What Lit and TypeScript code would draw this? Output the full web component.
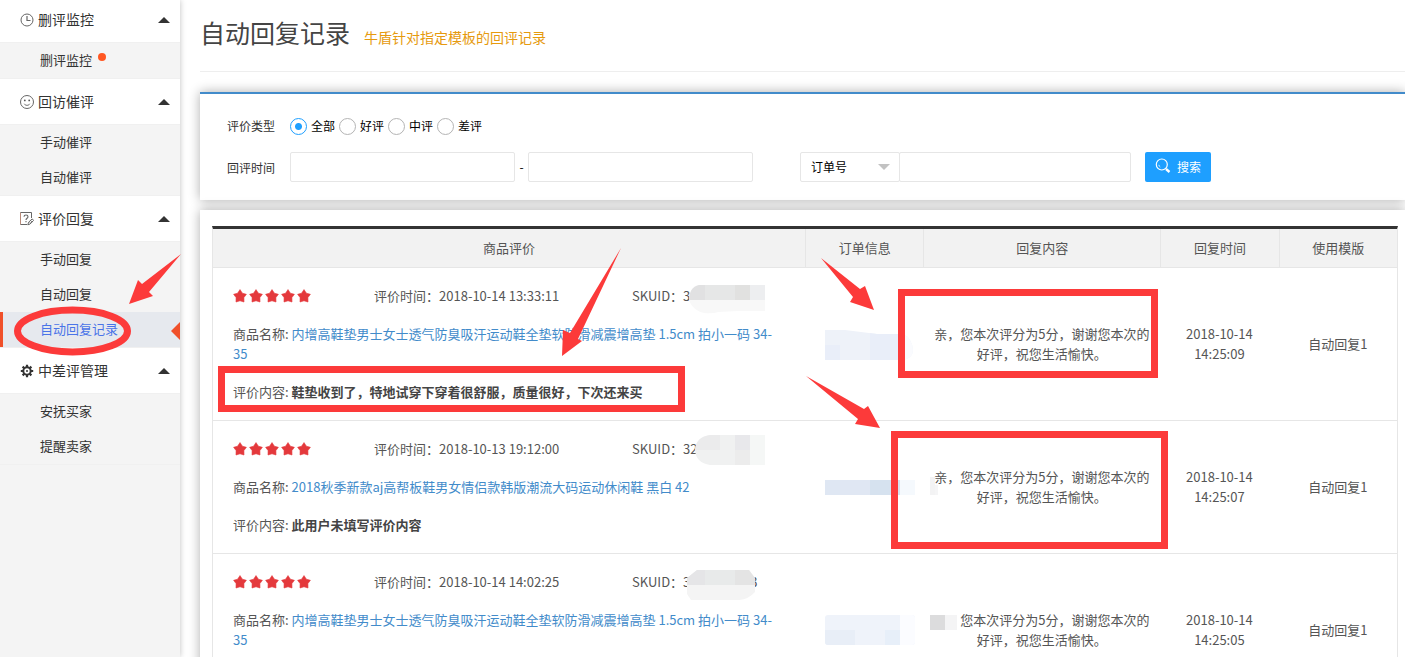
import { LitElement, html, css, svg, nothing } from "lit";
import { customElement, property, state } from "lit/decorators.js";
import { classMap } from "lit/directives/class-map.js";

interface MenuItem {
  label: string;
  active?: boolean;
  dot?: boolean;
}

interface MenuGroup {
  icon: string;
  label: string;
  items: MenuItem[];
}

interface ReplyRecord {
  time: string;
  sku: string;
  skuTail?: string;
  product: string;
  comment: string;
  reply: string;
  replyTime: string;
  template: string;
}

const MENU: MenuGroup[] = [
  { icon: "clock", label: "删评监控", items: [{ label: "删评监控", dot: true }] },
  { icon: "smile", label: "回访催评", items: [{ label: "手动催评" }, { label: "自动催评" }] },
  {
    icon: "note",
    label: "评价回复",
    items: [{ label: "手动回复" }, { label: "自动回复" }, { label: "自动回复记录", active: true }],
  },
  { icon: "gear", label: "中差评管理", items: [{ label: "安抚买家" }, { label: "提醒卖家" }] },
];

const INSOLE = "内增高鞋垫男士女士透气防臭吸汗运动鞋全垫软防滑减震增高垫 1.5cm 拍小一码 34-35";
const REPLY = "亲，您本次评分为5分，谢谢您本次的好评，祝您生活愉快。";

const RECORDS: ReplyRecord[] = [
  {
    time: "2018-10-14 13:33:11",
    sku: "3",
    product: INSOLE,
    comment: "鞋垫收到了，特地试穿下穿着很舒服，质量很好，下次还来买",
    reply: REPLY,
    replyTime: "2018-10-14 14:25:09",
    template: "自动回复1",
  },
  {
    time: "2018-10-13 19:12:00",
    sku: "32",
    product: "2018秋季新款aj高帮板鞋男女情侣款韩版潮流大码运动休闲鞋 黑白 42",
    comment: "此用户未填写评价内容",
    reply: REPLY,
    replyTime: "2018-10-14 14:25:07",
    template: "自动回复1",
  },
  {
    time: "2018-10-14 14:02:25",
    sku: "3",
    skuTail: "3",
    product: INSOLE,
    comment: "此用户未填写评价内容",
    reply: REPLY,
    replyTime: "2018-10-14 14:25:05",
    template: "自动回复1",
  },
];

const ICONS: Record<string, unknown> = {
  clock: svg`<g fill="none" stroke="#666" stroke-width="1"><circle cx="7" cy="7" r="6"/><path d="M7 3v4.500h3.500" stroke-width="1.200"/></g>`,
  smile: svg`<g fill="none" stroke="#666" stroke-width="1"><circle cx="7" cy="7" r="6.500"/><path d="M4.200 8.800c1.200 2 4.400 2 5.600 0"/></g><circle cx="4.800" cy="5.400" r=".9" fill="#555"/><circle cx="9.200" cy="5.400" r=".9" fill="#555"/>`,
  note: svg`<g fill="none" stroke="#666" stroke-width="1"><path d="M.5 12.500V.5" stroke="#b98a78"/><path d="M.5.5H11.500V6M.5 12.500H7"/><path d="M4 4.800c0-2.400 4-2.400 4 0 0 1.500-2 1.500-2 3.200M6 9v1.200" stroke-width="1.100"/><path d="M7.800 12.800l.8-2.600 3.600-3.300 1.400 1.500-3.500 3.600zM9.400 10l1.600 1.600M10.800 8.600l1.500 1.500"/></g>`,
  gear: svg`<g fill="none" stroke="#333"><circle cx="7" cy="7" r="3.700" stroke-width="2"/><path d="M7 .8v2.400M7 10.800v2.400M.8 7h2.400M10.800 7h2.400M2.600 2.600l1.700 1.700M9.700 9.700l1.700 1.700M2.600 11.400l1.700-1.700M9.700 4.300l1.700-1.700" stroke-width="2.200"/></g><circle cx="7" cy="7" r="1" fill="#333"/>`,
};

const FONT = css`"Noto Sans CJK SC", "Noto Sans", sans-serif`;

@customElement("side-menu")
export class SideMenu extends LitElement {
  static styles = css`
    :host {
      display: block;
      background: #f4f4f4;
      box-shadow: 0 0 6px rgba(0, 0, 0, 0.25);
      color: #333;
    }
    .head {
      display: flex;
      align-items: center;
      gap: 4px;
      box-sizing: border-box;
      width: 100%;
      height: 45px;
      padding: 0 10px 0 20px;
      border: 0;
      background: #fff;
      color: inherit;
      font: 14px/20px ${FONT};
      text-align: left;
    }
    .group:first-child .head {
      height: 42px;
      padding-bottom: 2px;
    }
    .name {
      flex: 1;
      padding-bottom: 2px;
    }
    .icon {
      width: 14px;
      height: 14px;
    }
    .caret {
      width: 12px;
      height: 6px;
    }
    .list {
      margin: 0;
      padding: 0;
      list-style: none;
      border: solid #f0f0f0;
      border-width: 1px 0;
    }
    .item {
      position: relative;
      display: flex;
      height: 35px;
      padding-left: 40px;
      font-size: 13px;
      line-height: 33px;
    }
    .item a {
      color: inherit;
      text-decoration: none;
    }
    .item.active {
      background: #e6e9ee;
      color: #4a74e8;
      box-shadow: inset 3px 0 #f0502a;
    }
    .item.active::after {
      content: "";
      position: absolute;
      right: 0;
      top: 10px;
      border: 9px solid transparent;
      border-left: 0;
      border-right-color: #f0502a;
    }
    .dot {
      width: 8px;
      height: 8px;
      margin: 10px 0 0 6px;
      border-radius: 50%;
      background: #ff5722;
    }
  `;

  @property({ attribute: false }) groups: MenuGroup[] = [];

  render() {
    return html`<nav>
      ${this.groups.map(
        (g) => html`<div class="group">
          <button class="head" type="button" aria-expanded="true">
            <svg class="icon" viewBox="0 0 14 14" aria-hidden="true">${ICONS[g.icon]}</svg>
            <span class="name">${g.label}</span>
            <svg class="caret" viewBox="0 0 12 6" aria-hidden="true"><path d="M0 6L6 0l6 6z" fill="#333" /></svg>
          </button>
          <ul class="list">
            ${g.items.map(
              (i) => html`<li class=${classMap({ item: true, active: !!i.active })}>
                <a href="#">${i.label}</a>${i.dot ? html`<span class="dot"></span>` : nothing}
              </li>`,
            )}
          </ul>
        </div>`,
      )}
    </nav>`;
  }
}

@customElement("search-panel")
export class SearchPanel extends LitElement {
  static styles = css`
    :host {
      display: block;
      padding: 22px 27px 18px;
      border-top: 2px solid #428bca;
      background: #fff;
      box-shadow: 0 0 11px rgba(0, 0, 0, 0.32);
      color: #333;
      font-size: 12px;
      line-height: 20px;
    }
    .row {
      display: flex;
      align-items: center;
    }
    .row + .row {
      margin-top: 16px;
    }
    .label {
      flex: none;
      width: 63px;
      padding-top: 2px;
    }
    .row:first-child .label {
      padding-top: 0;
    }
    .radios {
      display: flex;
      gap: 4px;
    }
    .option {
      display: flex;
      align-items: center;
      gap: 4px;
      color: #000;
    }
    .radio {
      appearance: none;
      box-sizing: border-box;
      width: 17px;
      height: 17px;
      margin: 0;
      border: 1px solid #b4b4b4;
      border-radius: 50%;
    }
    .radio:checked {
      border-color: #1e9fff;
      background: radial-gradient(circle, #1e9fff 3px, transparent 4px);
    }
    .field {
      box-sizing: border-box;
      width: 225px;
      min-width: 0;
      height: 30px;
      padding: 0 10px;
      border: 1px solid #e6e6e6;
      border-radius: 2px;
      background: #fff;
      color: #000;
      font: 12px/18px ${FONT};
    }
    .dash {
      width: 13px;
      color: #000;
      text-align: center;
    }
    .picker {
      position: relative;
      display: flex;
      margin-left: 47px;
    }
    .picker::after {
      content: "";
      position: absolute;
      right: 10px;
      top: 12px;
      border: 6px solid transparent;
      border-top-color: #c2c2c2;
      border-bottom: 0;
      pointer-events: none;
    }
    .kind {
      appearance: none;
      width: 100px;
    }
    .keyword {
      width: 232px;
      margin-left: -1px;
    }
    .search {
      display: flex;
      flex: none;
      align-items: center;
      gap: 6px;
      height: 30px;
      margin-left: 14px;
      padding: 0 10px;
      border: 0;
      border-radius: 2px;
      background: #1e9fff;
      color: #fff;
      font: 12px/20px ${FONT};
    }
    .glass {
      width: 16px;
      height: 16px;
      margin-bottom: 2px;
    }
  `;

  @state() private kind = "全部";

  render() {
    return html`<form @submit=${(e: Event) => e.preventDefault()}>
      <div class="row" role="radiogroup" aria-labelledby="type-label">
        <span class="label" id="type-label">评价类型</span>
        <div class="radios">
          ${["全部", "好评", "中评", "差评"].map(
            (k) => html`<label class="option"
              ><input
                class="radio"
                type="radio"
                name="kind"
                .checked=${this.kind === k}
                @change=${() => (this.kind = k)}
              />${k}</label
            >`,
          )}
        </div>
      </div>
      <div class="row">
        <label class="label" for="from">回评时间</label>
        <input class="field" id="from" type="text" />
        <span class="dash">-</span>
        <input class="field" type="text" aria-label="回评时间" />
        <span class="picker">
          <select class="field kind" aria-label="订单号">
            <option>订单号</option>
          </select>
        </span>
        <input class="field keyword" type="text" aria-label="订单号" />
        <button class="search" type="submit">
          <svg class="glass" viewBox="0 0 16 16" fill="none" stroke="#fff" aria-hidden="true">
            <circle cx="6.800" cy="6.500" r="5.500" stroke-width="1.200" />
            <path d="M3.800 6.800a3 3 0 0 0 1.500 2.200" stroke-width=".8" />
            <path d="M11 11l3.500 3" stroke-width="2.400" />
          </svg>
          搜索
        </button>
      </div>
    </form>`;
  }
}

@customElement("record-table")
export class RecordTable extends LitElement {
  static styles = css`
    :host {
      display: block;
      padding: 16px 7px 16px 12px;
      background: #fff;
      box-shadow: 0 0 11px rgba(0, 0, 0, 0.32);
      color: #555;
      font-size: 13px;
      line-height: 20px;
    }
    .table {
      width: 100%;
      table-layout: fixed;
      border-collapse: separate;
      border-spacing: 0;
      border: 1px solid #e6e6e6;
      border-top: 3px solid #333;
    }
    .wide {
      width: 50%;
    }
    .medium {
      width: 20%;
    }
    .narrow {
      width: 10%;
    }
    th {
      box-sizing: border-box;
      height: 39px;
      padding: 0;
      border-bottom: 1px solid #e6e6e6;
      background: #f2f2f2;
      font-weight: 400;
    }
    th + th {
      border-left: 1px solid #e6e6e6;
    }
    td {
      padding: 18px 10px;
      border-bottom: 1px solid #e6e6e6;
      text-align: center;
    }
    .review {
      padding: 18px 20px;
      text-align: left;
    }
    .stack {
      display: grid;
      gap: 18px;
    }
    .meta {
      display: grid;
      grid-template-columns: 141px 258px 1fr;
      white-space: nowrap;
    }
    .stars {
      display: flex;
      align-items: center;
      gap: 2px;
    }
    .star {
      width: 14px;
      height: 14px;
    }
    .tail {
      margin-left: 60px;
    }
    .product {
      color: #428bca;
      text-decoration: none;
    }
    .comment {
      color: #444;
      font-weight: 700;
    }
  `;

  @property({ attribute: false }) records: ReplyRecord[] = [];

  private row(r: ReplyRecord) {
    return html`<tr>
      <td class="review">
        <div class="stack">
          <div class="meta">
            <span class="stars" role="img" aria-label="5">
              ${[1, 2, 3, 4, 5].map(
                () => html`<svg class="star" viewBox="0 0 14 14" aria-hidden="true">
                  <path
                    d="M7 .6L9.400 4.200 13.400 5.300 10.900 8.600 11 13 7 11.800 3 13 3.100 8.600.6 5.300 4.600 4.200z"
                    fill="#e4393c"
                    stroke="#e4393c"
                    stroke-width=".6"
                    stroke-linejoin="round"
                  />
                </svg>`,
              )}
            </span>
            <span>评价时间：${r.time}</span>
            <span>SKUID：${r.sku}${r.skuTail ? html`<span class="tail">${r.skuTail}</span>` : nothing}</span>
          </div>
          <div>商品名称: <a class="product" href="#">${r.product}</a></div>
          <div>评价内容: <span class="comment">${r.comment}</span></div>
        </div>
      </td>
      <td></td>
      <td>${r.reply}</td>
      <td>${r.replyTime}</td>
      <td>${r.template}</td>
    </tr>`;
  }

  render() {
    return html`<table class="table">
      <thead>
        <tr>
          <th class="wide">商品评价</th>
          <th class="narrow">订单信息</th>
          <th class="medium">回复内容</th>
          <th class="narrow">回复时间</th>
          <th class="narrow">使用模版</th>
        </tr>
      </thead>
      <tbody>
        ${this.records.map((r) => this.row(r))}
      </tbody>
    </table>`;
  }
}

/* Pixelated privacy patches: x, y, width, height, fill. */
const PATCHES: [number, number, number, number, string][] = [
  [825, 480, 15, 15, "#dfe7f3"],
  [840, 480, 30, 15, "#e0e7f3"],
  [870, 480, 30, 15, "#d6e2ef"],
  [900, 480, 15, 15, "#f5f9fd"],
  [930, 477, 5, 18, "#f3f3f4"],
  [935, 485, 3, 10, "#f5f5f6"],
  [930, 612, 30, 21, "#ffffff"],
  [930, 615, 15, 15, "#dcdcdd"],
  [945, 615, 12, 15, "#f4f4f5"],
];

@customElement("mark-layer")
export class MarkLayer extends LitElement {
  static styles = css`
    :host {
      display: block;
      pointer-events: none;
    }
    .canvas {
      display: block;
      width: 100%;
      height: 100%;
    }
  `;

  render() {
    return html`<svg class="canvas" aria-hidden="true">
      <defs>
        <clipPath id="sku1"><path d="M699 285h66v26h-27l-20 1q-5 2-14 1-10-2-15-12 0-14 10-16z" /></clipPath>
        <clipPath id="sku2"><path d="M710 435h55v30h-55q-14-2-15-15 1-13 15-15z" /></clipPath>
        <clipPath id="sku3"><path d="M697 570h52l6 8v14q-6 7-16 8h-48l-4-6v-16z" /></clipPath>
        <clipPath id="ord1"><path d="M825 330h20l32 4h26q9 4 10 16 0 8-10 10h-78z" /></clipPath>
        <clipPath id="ord3"><rect x="825" y="615" width="90" height="30" rx="3" /></clipPath>
      </defs>
      ${PATCHES.map(([x, y, w, h, f]) => svg`<rect x=${x} y=${y} width=${w} height=${h} fill=${f}/>`)}
      <g clip-path="url(#sku1)">
        <rect x="685" y="285" width="80" height="30" fill="#f8f8f8" />
        <rect x="685" y="285" width="20" height="15" fill="#e1e1e2" />
        <rect x="705" y="285" width="30" height="15" fill="#e6e7e7" />
        <rect x="735" y="285" width="15" height="15" fill="#e1e1e0" />
        <rect x="750" y="285" width="15" height="15" fill="#edeef0" />
      </g>
      <g clip-path="url(#sku2)">
        <rect x="695" y="435" width="70" height="30" fill="#f0f1f1" />
        <rect x="695" y="435" width="25" height="15" fill="#ebebec" />
        <rect x="735" y="435" width="15" height="15" fill="#e8e8eb" />
        <rect x="735" y="450" width="15" height="15" fill="#ececec" />
        <rect x="750" y="435" width="15" height="30" fill="#f5f7f6" />
      </g>
      <g clip-path="url(#sku3)">
        <rect x="687" y="570" width="70" height="30" fill="#f4f4f4" />
        <rect x="687" y="570" width="18" height="15" fill="#e5e5e7" />
        <rect x="705" y="570" width="30" height="15" fill="#e8eaea" />
        <rect x="735" y="570" width="20" height="15" fill="#e4e4e4" />
      </g>
      <g clip-path="url(#ord1)">
        <rect x="825" y="330" width="90" height="30" fill="#eef2f9" />
        <rect x="825" y="345" width="15" height="15" fill="#e9eef9" />
        <rect x="870" y="333" width="30" height="27" fill="#e9eef9" />
        <rect x="900" y="333" width="15" height="27" fill="#fafbfe" />
      </g>
      <g clip-path="url(#ord3)">
        <rect x="825" y="615" width="90" height="30" fill="#eff3fa" />
        <rect x="825" y="630" width="30" height="15" fill="#e8eef7" />
        <rect x="885" y="630" width="15" height="15" fill="#e7eff9" />
        <rect x="900" y="615" width="15" height="30" fill="#fbfcff" />
      </g>
      <g fill="none" stroke="#fc3a3a" stroke-width="7">
        <ellipse cx="72.500" cy="331" rx="55" ry="21" />
        <rect x="221.500" y="369.500" width="460" height="39" />
        <rect x="901.500" y="292.500" width="253" height="82" />
        <rect x="894.500" y="434.500" width="270" height="111" />
      </g>
      <g fill="#fc3a3a">
        <path d="M181 254L142 284l-4-4-9 24 24-8-4-4z" />
        <path d="M621 248L570 333l-7-3-1 26 20-15-4-2z" />
        <path d="M821 258l39 31 5-3 9 24-24-8 3-5z" />
        <path d="M806 376l58 33 4-3 12 22-25-4 3-5z" />
      </g>
    </svg>`;
  }
}

@customElement("app-root")
export class AppRoot extends LitElement {
  static styles = css`
    :host {
      position: relative;
      display: grid;
      grid-template-columns: 180px minmax(0, 1fr);
      height: 100vh;
      overflow: hidden;
      background: #fff;
      font-family: ${FONT};
    }
    .side {
      z-index: 1;
    }
    .main {
      display: flow-root;
      overflow: hidden;
      padding-left: 20px;
    }
    .header {
      display: flex;
      align-items: baseline;
      gap: 14px;
      padding: 12px 0 19px;
      border-bottom: 1px solid #eee;
    }
    .title {
      margin: 0;
      color: #444;
      font-size: 25px;
      font-weight: 400;
      line-height: 40px;
    }
    .note {
      color: #e69a0e;
      font-size: 14px;
    }
    .search {
      margin-top: 20px;
    }
    .records {
      margin-top: 10px;
    }
    .marks {
      position: absolute;
      inset: 0;
      z-index: 2;
    }
  `;

  render() {
    return html`
      <side-menu class="side" .groups=${MENU}></side-menu>
      <main class="main">
        <header class="header">
          <h1 class="title">自动回复记录</h1>
          <span class="note">牛盾针对指定模板的回评记录</span>
        </header>
        <search-panel class="search"></search-panel>
        <record-table class="records" .records=${RECORDS}></record-table>
      </main>
      <mark-layer class="marks"></mark-layer>
    `;
  }
}
